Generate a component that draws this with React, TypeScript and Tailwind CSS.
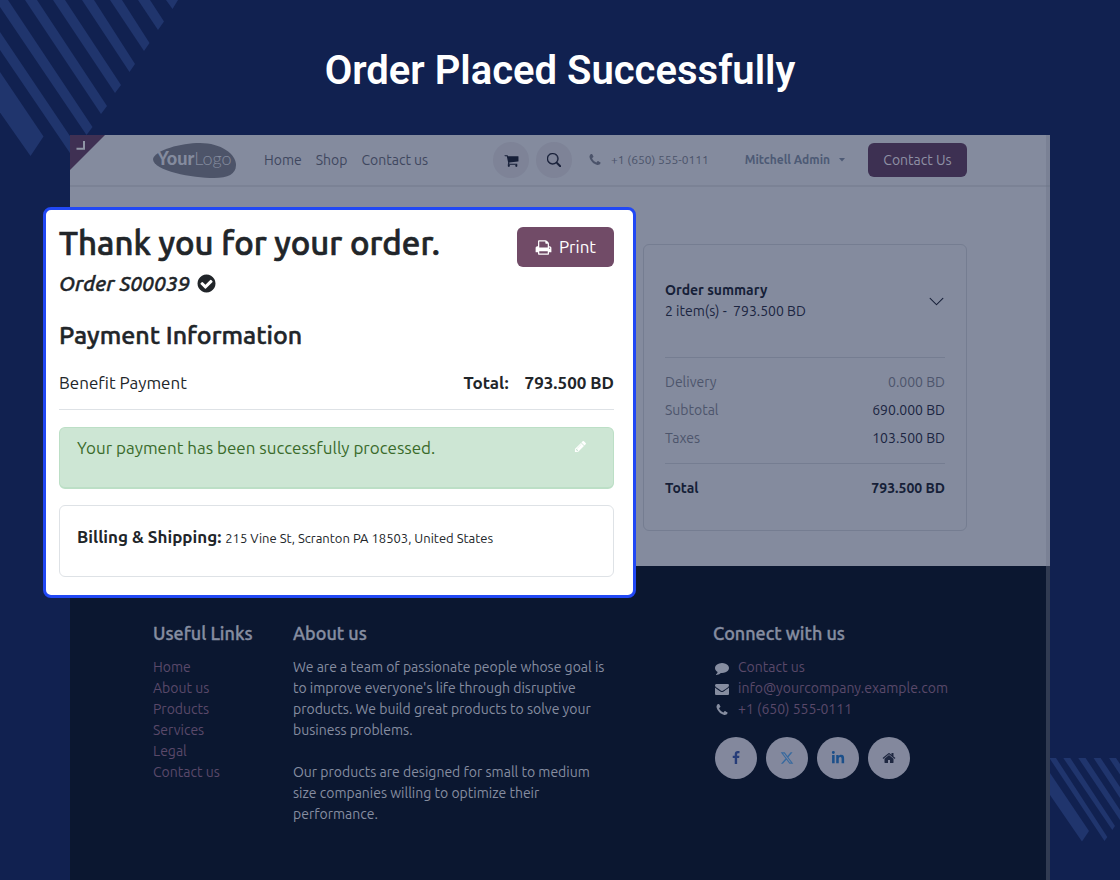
import type { ReactNode } from "react";
import { FaLinkedinIn } from "react-icons/fa";
import { FaXTwitter } from "react-icons/fa6";
import { BsChevronDown, BsSearch } from "react-icons/bs";

const glyphs = {
  cart: "M704 1536q0 52-38 90t-90 38-90-38-38-90 38-90 90-38 90 38 38 90zm896 0q0 52-38 90t-90 38-90-38-38-90 38-90 90-38 90 38 38 90zm128-1088v512q0 24-16.5 42.5t-40.5 21.5l-1044 122q13 60 13 70 0 16-24 64h920q26 0 45 19t19 45-19 45-45 19h-1024q-26 0-45-19t-19-45q0-11 8-31.5t16-36 21.5-40 15.5-29.5l-177-823h-204q-26 0-45-19t-19-45 19-45 45-19h256q16 0 28.5 6.5t19.5 15.5 13 24.5 8 26 5.5 29.5 4.5 26h1201q26 0 45 19t19 45z",
  phone: "M1600 1240q0 27-10 70.5t-21 68.5q-21 50-122 106-94 51-186 51-27 0-53-3.5t-57.5-12.5-47-14.5-55.5-20.5-49-18q-98-35-175-83-127-79-264-216t-216-264q-48-77-83-175-3-9-18-49t-20.5-55.5-14.5-47-12.5-57.5-3.5-53q0-92 51-186 56-101 106-122 25-11 68.5-21t70.5-10q14 0 21 3 18 6 53 76 11 19 30 54t35 63.5 31 53.5q3 4 17.5 25t21.5 35.5 7 28.5q0 20-28.5 50t-62 55-62 53-28.5 46q0 9 5 22.5t8.5 20.5 14 24 11.5 19q76 137 174 235t235 174q2 1 19 11.5t24 14 20.5 8.5 22.5 5q18 0 46-28.5t53-62 55-62 50-28.5q14 0 28.5 7t35.5 21.5 25 17.5q25 15 53.5 31t63.5 35 54 30q70 35 76 53 3 7 3 21z",
  print: "M448 1536h896v-256h-896v256zm0-640h896v-384h-160q-40 0-68-28t-28-68v-160h-640v640zm1152 64q0-26-19-45t-45-19-45 19-19 45 19 45 45 19 45-19 19-45zm128 0v416q0 13-9.5 22.5t-22.5 9.5h-224v160q0 40-28 68t-68 28h-960q-40 0-68-28t-28-68v-160h-224q-13 0-22.5-9.5t-9.5-22.5v-416q0-79 56.5-135.5t135.5-56.5h64v-544q0-40 28-68t68-28h672q40 0 88 20t76 48l152 152q28 28 48 76t20 88v256h64q79 0 135.5 56.5t56.5 135.5z",
  pencil: "M491 1536l91-91-235-235-91 91v107h128v128h107zm523-928q0-22-22-22-10 0-17 7l-542 542q-7 7-7 17 0 22 22 22 10 0 17-7l542-542q7-7 7-17zm-54-192l416 416-832 832h-416v-416zm683 96q0 53-37 90l-166 166-416-416 166-165q36-38 90-38 53 0 91 38l235 234q37 39 37 91z",
  check: "M1412 734q0-28-18-46l-91-90q-19-19-45-19t-45 19l-408 407-226-226q-19-19-45-19t-45 19l-91 90q-18 18-18 46 0 27 18 45l362 362q19 19 45 19 27 0 46-19l543-543q18-18 18-45zm252 162q0 209-103 385.5t-279.5 279.5-385.5 103-385.5-103-279.5-279.5-103-385.5 103-385.5 279.5-279.5 385.5-103 385.5 103 279.5 279.5 103 385.5z",
  comment: "M1792 896q0 174-120 321.5t-326 233-450 85.5q-70 0-145-8-198 175-460 242-49 14-114 22-17 2-30.5-9t-17.5-29v-1q-3-4-.5-12t2-10 4.5-9.5l6-9 7-8.500 8-9q7-8 31-34.5t34.5-38 31-39.5 32.5-51 27-59 26-76q-157-89-247.5-220t-90.5-281q0-130 71-248.5t191-204.5 286-136.5 348-50.5q244 0 450 85.5t326 233 120 321.5z",
  envelope: "M1792 710v794q0 66-47 113t-113 47h-1472q-66 0-113-47t-47-113v-794q44 49 101 87 362 246 497 345 57 42 92.5 65.5t94.5 48 110 24.5h2q51 0 110-24.5t94.5-48 92.5-65.5q170-123 498-345 57-39 100-87zm0-294q0 79-49 151t-122 123q-376 261-468 325-10 7-42.5 31t-54 38.5-52 32.5-57.5 27-50 9h-2q-23 0-50-9t-57.5-27-52-32.5-54-38.5-42.5-31q-91-64-262-182.5t-205-142.5q-62-42-117-115.5t-55-136.5q0-78 41.5-130t118.5-52h1472q65 0 112.5 47t47.5 113z",
  home: "M1472 992v480q0 26-19 45t-45 19h-384v-384h-256v384h-384q-26 0-45-19t-19-45v-480q0-1 .5-3t.5-3l575-474 575 474q1 2 1 6zm223-69l-62 74q-8 9-21 11h-3q-13 0-21-7l-692-577-692 577q-12 8-24 7-13-2-21-11l-62-74q-8-10-7-23.5t11-21.5l719-599q32-26 76-26t76 26l244 204v-195q0-14 9-23t23-9h192q14 0 23 9t9 23v408l219 182q10 8 11 21.5t-7 23.5z",
  facebook: "M1343 12v264h-157q-86 0-116 36t-30 108v189h293l-39 296h-254v759h-306v-759h-255v-296h255v-218q0-186 104-288.5t277-102.5q147 0 228 12z",
};

function Glyph({ name, className }: { name: keyof typeof glyphs; className: string }) {
  return (
    <svg viewBox="0 0 1792 1792" fill="currentColor" className={className} aria-hidden="true">
      <path d={glyphs[name]} />
    </svg>
  );
}

function Stripes() {
  return (
    <>
      <svg className="absolute left-0 top-0 h-40 w-[180px]" viewBox="0 0 180 160" fill="#20356d" aria-hidden="true">
        <path d="M0 72L43.5 136.5 30.5 156 0 112.500Z" />
        <path d="M0 32L78 148 72 156 0 50Z" />
        <path d="M0 0H8L92.500 127 86.500 135 0 7Z" />
        <path d="M25 0H37L107 106 101 114Z" />
        <path d="M53 0H65L121 85 115 93Z" />
        <path d="M82 0H94L135 64 129.500 72Z" />
        <path d="M110 0H122L149.500 43 144 51Z" />
        <path d="M138 0H150L164 21.500 158 30Z" />
        <path d="M166 0H178L172.500 9Z" />
      </svg>
      <svg className="absolute bottom-[38px] right-0 h-[84px] w-[70px]" viewBox="0 0 70 84" fill="#20356d" aria-hidden="true">
        <path d="M0 15L39 73 32 83.500 0 37Z" />
        <path d="M0 0H6L57.300 79 54.500 83 0 1Z" />
        <path d="M13.300 0H20.300L65 68 62.300 72Z" />
        <path d="M28.300 0H35.600L70 52V62Z" />
        <path d="M43.600 0H50.600L70 29V40Z" />
        <path d="M59 0H66L70 6V16.500Z" />
      </svg>
    </>
  );
}

function Logo() {
  return (
    <svg viewBox="0 0 84 37" className="h-[37px] w-[84px]" role="img" aria-label="YourLogo">
      <path d="M0 17C2 8 28 1 47 1C68 1 83 12 83 23C83 32 75 36 61 36C40 36 0 29 0 17Z" fill="#4d5469" />
      <text x="4" y="23" fontSize="18" fill="#848b9e" fontFamily="Lato, sans-serif">
        <tspan fontWeight="900">Your</tspan>
        <tspan fontWeight="300">Logo</tspan>
      </text>
    </svg>
  );
}

function NavBar() {
  return (
    <header className="flex h-[52px] items-center border-b-2 border-[#7b8295] px-[83px] text-[#3f475e]">
      <a href="#home"><Logo /></a>
      <nav className="ml-[27px] flex gap-[14px] text-sm">
        <a href="#home">Home</a>
        <a href="#shop">Shop</a>
        <a href="#contact">Contact us</a>
      </nav>
      <div className="ml-auto flex items-center">
        <button aria-label="Cart" className="flex size-9 items-center justify-center rounded-full bg-[#7e8397] text-[#161f38]">
          <Glyph name="cart" className="size-[15px]" />
        </button>
        <button aria-label="Search" className="ml-[7px] flex size-9 items-center justify-center rounded-full bg-[#7e8397] text-[#161f38]">
          <BsSearch className="size-[14px]" strokeWidth={0.5} />
        </button>
        <a href="tel:+16505550111" className="ml-4 flex items-center gap-[9px] text-xs text-[#4b536a]">
          <Glyph name="phone" className="size-[14px]" />
          +1 (650) 555-0111
        </a>
        <button className="ml-9 flex items-center gap-2 text-xs font-bold text-[#4d5a75]">
          Mitchell Admin
          <svg viewBox="0 0 8 4" className="h-1 w-2" fill="currentColor" aria-hidden="true"><path d="M1 0H7L4 3.500Z" /></svg>
        </button>
        <button className="ml-[22px] h-[34px] w-[99px] rounded-md bg-[#3d3052] text-sm text-[#8f91a5]">Contact Us</button>
      </div>
    </header>
  );
}

const summaryRows = [
  { label: "Delivery", value: "0.000 BD", tone: "text-[#4d556c]" },
  { label: "Subtotal", value: "690.000 BD", tone: "text-[#1b2541]" },
  { label: "Taxes", value: "103.500 BD", tone: "text-[#1b2541]" },
];

function OrderSummary() {
  return (
    <section className="ml-auto w-[324px] rounded-md border border-[#757d91] px-[21px] pb-[31px] pt-[35px] text-sm leading-[21px] text-[#161f38]">
      <div className="flex items-center justify-between pb-[35px]">
        <div>
          <h2 className="font-bold">Order summary</h2>
          <p className="text-[#1b2541]">2 item(s) -&nbsp; 793.500 BD</p>
        </div>
        <button aria-label="Show items"><BsChevronDown className="size-[17px]" /></button>
      </div>
      <table className="w-full border-y border-[#757d91]">
        <tbody>
          <tr className="h-[11px]" aria-hidden="true"><td colSpan={2} /></tr>
          {summaryRows.map((row) => (
            <tr key={row.label} className="h-7">
              <th scope="row" className="p-0 text-left font-normal text-[#4d556c]">{row.label}</th>
              <td className={`p-0 text-right ${row.tone}`}>{row.value}</td>
            </tr>
          ))}
          <tr className="h-[11px]" aria-hidden="true"><td colSpan={2} /></tr>
        </tbody>
      </table>
      <p className="flex justify-between pt-[14px] font-bold">
        <span>Total</span>
        <span>793.500 BD</span>
      </p>
    </section>
  );
}

function SocialLink({ label, tone, children }: { label: string; tone: string; children: ReactNode }) {
  return (
    <a href="#social" aria-label={label} className={`flex size-[42px] items-center justify-center rounded-full bg-[#83889d] ${tone}`}>
      {children}
    </a>
  );
}

function FooterHeading({ children }: { children: ReactNode }) {
  return <h2 className="mb-3 text-lg font-medium leading-6 [-webkit-text-stroke:0.02em]">{children}</h2>;
}

const usefulLinks = ["Home", "About us", "Products", "Services", "Legal", "Contact us"];

function Footer() {
  return (
    <footer className="grid flex-1 grid-cols-[140px_1fr_254px] bg-[#0b1730] px-[83px] pt-[55px] text-sm leading-[21px] text-[#868da0]">
      <section>
        <FooterHeading>Useful Links</FooterHeading>
        <ul className="text-[#5a496a]">
          {usefulLinks.map((link) => (
            <li key={link}><a href="#links">{link}</a></li>
          ))}
        </ul>
      </section>
      <section className="pr-[98px]">
        <FooterHeading>About us</FooterHeading>
        <p>
          We are a team of passionate people whose goal is to improve everyone's life through disruptive products. We
          build great products to solve your business problems.
        </p>
        <p className="mt-[21px]">
          Our products are designed for small to medium size companies willing to optimize their performance.
        </p>
      </section>
      <section>
        <FooterHeading>Connect with us</FooterHeading>
        <ul className="text-[#5a496a]">
          <li className="flex items-center gap-[9px] pl-0.5">
            <Glyph name="comment" className="size-[14px] text-[#868da0]" />
            <a href="#contact">Contact us</a>
          </li>
          <li className="flex items-center gap-[9px] pl-0.5">
            <Glyph name="envelope" className="size-[14px] text-[#868da0]" />
            <a href="mailto:info@yourcompany.example.com">info@yourcompany.example.com</a>
          </li>
          <li className="flex items-center gap-[9px] pl-0.5">
            <Glyph name="phone" className="size-[14px] text-[#868da0]" />
            <a href="tel:+16505550111">+1 (650) 555-0111</a>
          </li>
        </ul>
        <div className="mt-[17px] flex gap-[9px] pl-0.5">
          <SocialLink label="Facebook" tone="text-[#263c78]"><Glyph name="facebook" className="size-[14px]" /></SocialLink>
          <SocialLink label="X" tone="text-[#386a9f]"><FaXTwitter className="size-[14px]" /></SocialLink>
          <SocialLink label="LinkedIn" tone="text-[#1b4f8a]"><FaLinkedinIn className="size-[14px]" /></SocialLink>
          <SocialLink label="Home page" tone="text-[#1e2740]"><Glyph name="home" className="size-[14px]" /></SocialLink>
        </div>
      </section>
    </footer>
  );
}

function Confirmation() {
  return (
    <section className="absolute -left-[27px] right-[414px] top-[72px] rounded-lg border-[3px] border-[#2148f5] bg-white pb-[18px] pl-[13px] pr-[19px] pt-[17px] text-[17px] text-[#212529]">
      <div className="flex items-start justify-between">
        <div>
          <h2 className="text-[33px] font-medium leading-8 [-webkit-text-stroke:0.02em]">Thank you for your order.</h2>
          <p className="mt-[9px] flex items-center gap-1.5 text-[21px] font-medium italic leading-[30px] [-webkit-text-stroke:0.02em]">
            Order S00039
            <Glyph name="check" className="size-[21px]" />
          </p>
        </div>
        <button className="flex h-10 w-[97px] items-center justify-center gap-[7px] rounded-md bg-[#714b67] text-white">
          <Glyph name="print" className="size-[17px]" />
          Print
        </button>
      </div>
      <h3 className="mt-5 text-[25px] font-medium leading-[34px] [-webkit-text-stroke:0.02em]">Payment Information</h3>
      <div className="mt-[19px] flex justify-between border-b border-[#dee2e6] pb-[14px] leading-6">
        <span>Benefit Payment</span>
        <span className="flex gap-4 font-bold"><span>Total:</span><span>793.500 BD</span></span>
      </div>
      <div className="mt-[17px] flex min-h-[62px] items-start justify-between rounded-md border border-b-2 border-[#bcdfc6] bg-[#cde6d4] py-2 pl-[17px] pr-[26px] leading-6 text-[#3a6b2b]">
        <p>Your payment has been successfully processed.</p>
        <button aria-label="Edit message" className="mt-1 text-white"><Glyph name="pencil" className="size-[13px]" /></button>
      </div>
      <div className="mt-4 rounded-md border border-[#dee2e6] px-[17px] pb-[26px] pt-[19px] leading-6">
        <strong>Billing &amp; Shipping:</strong> <span className="text-[13px]">215 Vine St, Scranton PA 18503, United States</span>
      </div>
    </section>
  );
}

export default function App() {
  return (
    <div className="relative flex min-h-screen flex-col overflow-hidden bg-[#112150] font-['Ubuntu','Noto_Sans',sans-serif]">
      <Stripes />
      <h1 className="pb-10 pt-[46px] text-center font-['Roboto',sans-serif] text-[40px] font-semibold leading-[49px] text-white">
        Order Placed Successfully
      </h1>
      <div className="relative mx-[70px] flex flex-1 flex-col bg-[#848b9e]">
        <NavBar />
        <svg className="absolute left-0 top-0 size-[35px]" viewBox="0 0 35 35" aria-hidden="true">
          <path d="M0 0H35L0 35Z" fill="#3f3053" />
          <path d="M6.500 13.800H14V6" fill="none" stroke="#8f95a5" strokeWidth="2" />
        </svg>
        <main className="px-[83px] pb-[35px] pt-[57px]">
          <OrderSummary />
        </main>
        <Footer />
        <div className="absolute inset-y-0 right-0 w-1 bg-[#6b7287]/40" />
        <Confirmation />
      </div>
    </div>
  );
}
